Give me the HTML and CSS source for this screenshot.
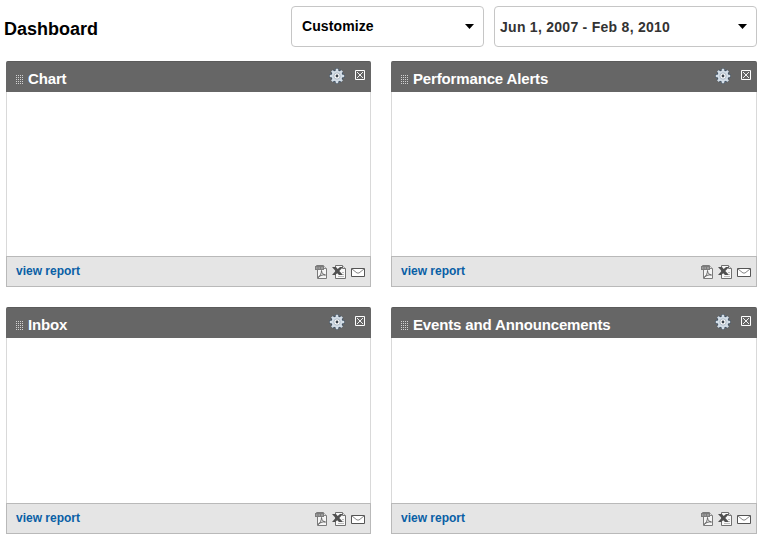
FILE: index.html
```html
<!DOCTYPE html>
<html lang="en">
<head>
<meta charset="utf-8">
<title>Dashboard</title>
<link rel="stylesheet" href="styles.css">
</head>
<body>
<svg class="symbols" width="0" height="0">
  <symbol id="grip" viewBox="0 0 7 9">
    <path d="M0 .5h7M0 2.5h7M0 4.5h7M0 6.5h7M0 8.5h7" stroke="#d2d2d2" stroke-dasharray="1 1"/>
  </symbol>
  <symbol id="gear" viewBox="0 0 16 16">
    <g stroke="#3b4c5e" stroke-width="4"><path d="M8 .5v15M.5 8h15M3 3l10 10M13 3L3 13"/></g>
    <circle cx="8" cy="8" r="6.300" fill="#3b4c5e"/>
    <g stroke="#d3dde6" stroke-width="2.600"><path d="M8 .8v14.400M.8 8h14.400M2.900 2.900l10.200 10.200M13.100 2.900L2.900 13.100"/></g>
    <circle cx="8" cy="8" r="5.500" fill="#d3dde6"/>
    <circle cx="8" cy="8" r="3.200" fill="#fff" stroke="#a9b7c4"/>
    <circle cx="8" cy="8" r="1.400" fill="#39434d"/>
  </symbol>
  <symbol id="close" viewBox="0 0 10 10">
    <path d="M.5.5h9v9h-9z" fill="none" stroke="#fff"/>
    <path d="M2 2l6 6M8 2L2 8" stroke="#fff" stroke-width=".9"/>
  </symbol>
  <symbol id="pdf" viewBox="0 0 12 14">
    <path d="M2.500 5v8.500h9V3.500L8.500.5h-7V2" fill="#f5f5f5" stroke="#7a7a7a"/>
    <path d="M8.500.5v3h3" fill="#ddd" stroke="#888"/>
    <path d="M0 1h9v4H0z" fill="#7c7c7c"/>
    <path d="M1 3h1.500M3.500 3H5M6 3h2" stroke="#bbb"/>
    <path d="M3 12.500c2-1 3.500-4 3.500-7 0 2.500 2 4.500 4 4.500-2-.5-5 0-7.500 2.500z" fill="none" stroke="#666"/>
  </symbol>
  <symbol id="xls" viewBox="0 0 14 14">
    <path d="M3.500 .5h7l3 3v10h-10z" fill="#f8f8f8" stroke="#707070"/>
    <path d="M10.500 .5v3h3" fill="#ddd" stroke="#777"/>
    <path d="M10 7.500h2M11 9.500h1M6 11.500h6" stroke="#bbb"/>
    <path d="M0 2h4l1.700 2L8 2h3L7.300 6 11 10H7L5.200 8.200 3.200 10H0l3.600-4z" fill="#505050"/>
  </symbol>
  <symbol id="mail" viewBox="0 0 14 9">
    <path d="M.5.5h13v8H.5z" fill="#fff" stroke="#555"/>
    <path d="M1 1l5 4h2l5-4" fill="none" stroke="#777" stroke-width=".9"/>
  </symbol>
</svg>
<header class="topbar">
  <h1>Dashboard</h1>
  <div class="select customize"><span>Customize</span><i class="caret"></i></div>
  <div class="select range"><span>Jun 1, 2007 - Feb 8, 2010</span><i class="caret"></i></div>
</header>
<main class="grid">
  <section class="panel">
    <header><svg class="grip"><use href="#grip"/></svg><h2>Chart</h2><svg class="gear"><use href="#gear"/></svg><svg class="close"><use href="#close"/></svg></header>
    <div class="content"></div>
    <footer><a>view report</a><svg class="pdf"><use href="#pdf"/></svg><svg class="xls"><use href="#xls"/></svg><svg class="mail"><use href="#mail"/></svg></footer>
  </section>
  <section class="panel">
    <header><svg class="grip"><use href="#grip"/></svg><h2>Performance Alerts</h2><svg class="gear"><use href="#gear"/></svg><svg class="close"><use href="#close"/></svg></header>
    <div class="content"></div>
    <footer><a>view report</a><svg class="pdf"><use href="#pdf"/></svg><svg class="xls"><use href="#xls"/></svg><svg class="mail"><use href="#mail"/></svg></footer>
  </section>
  <section class="panel">
    <header><svg class="grip"><use href="#grip"/></svg><h2>Inbox</h2><svg class="gear"><use href="#gear"/></svg><svg class="close"><use href="#close"/></svg></header>
    <div class="content"></div>
    <footer><a>view report</a><svg class="pdf"><use href="#pdf"/></svg><svg class="xls"><use href="#xls"/></svg><svg class="mail"><use href="#mail"/></svg></footer>
  </section>
  <section class="panel">
    <header><svg class="grip"><use href="#grip"/></svg><h2>Events and Announcements</h2><svg class="gear"><use href="#gear"/></svg><svg class="close"><use href="#close"/></svg></header>
    <div class="content"></div>
    <footer><a>view report</a><svg class="pdf"><use href="#pdf"/></svg><svg class="xls"><use href="#xls"/></svg><svg class="mail"><use href="#mail"/></svg></footer>
  </section>
</main>
</body>
</html>
```

FILE: styles.css
```css
* { box-sizing: border-box; }
body {
  margin: 0;
  height: 539px;
  overflow: hidden;
  background: #fff;
  font-family: "Liberation Sans", Arial, sans-serif;
}
h1, h2 { margin: 0; white-space: nowrap; }
svg { display: block; flex: none; }
.symbols { display: none; }
.topbar {
  display: flex;
  height: 61px;
  padding: 6px 7px 0 4px;
}
h1 {
  flex: 1;
  padding-top: 13px;
  font-size: 18px;
  line-height: 20px;
}
.select {
  display: flex;
  justify-content: space-between;
  height: 41px;
  border: 1px solid #c6c6c6;
  border-radius: 4px;
  font-weight: bold;
  font-size: 14px;
  line-height: 18px;
  white-space: nowrap;
}
.customize {
  width: 193px;
  margin-right: 10px;
  padding: 10px 9px 0 10px;
  letter-spacing: .1px;
}
.range {
  width: 263px;
  padding: 11px 9px 0 5px;
  color: #333;
  letter-spacing: .27px;
}
.caret {
  width: 9px;
  height: 5px;
  margin-top: 7px;
  background: #000;
  clip-path: polygon(0 0, 100% 0, 50% 100%);
}
.range .caret { margin-top: 6px; }
.grid {
  display: grid;
  grid-template-columns: 365px 366px;
  grid-template-rows: 226px 227px;
  gap: 20px;
  padding-left: 6px;
}
.panel { display: flex; flex-direction: column; }
.panel header {
  display: flex;
  height: 31px;
  padding: 0 6px 0 10px;
  background: #666;
  border-top: 1px solid #5b5b5b;
  border-radius: 2px 2px 0 0;
}
h2 {
  flex: 1;
  margin-left: 5px;
  padding-top: 8px;
  color: #fff;
  font-size: 15px;
  line-height: 18px;
  letter-spacing: -.15px;
}
.grip { width: 7px; height: 9px; margin-top: 13px; }
.gear { width: 16px; height: 16px; margin: 6px 10px 0 0; }
.close { width: 10px; height: 10px; margin-top: 8px; }
.content {
  flex: 1;
  border: solid #d9d9d9;
  border-width: 0 1px;
}
.panel footer {
  display: flex;
  height: 31px;
  padding: 0 5px 0 9px;
  background: #e5e5e5;
  border: 1px solid #b9b9b9;
}
.panel a {
  flex: 1;
  padding-top: 6px;
  color: #0a5fa5;
  font-size: 12px;
  font-weight: bold;
  line-height: 16px;
}
.pdf { width: 12px; height: 14px; margin: 8px 5px 0 0; }
.xls { width: 14px; height: 14px; margin: 8px 5px 0 0; }
.mail { width: 14px; height: 9px; margin-top: 11px; }
```
